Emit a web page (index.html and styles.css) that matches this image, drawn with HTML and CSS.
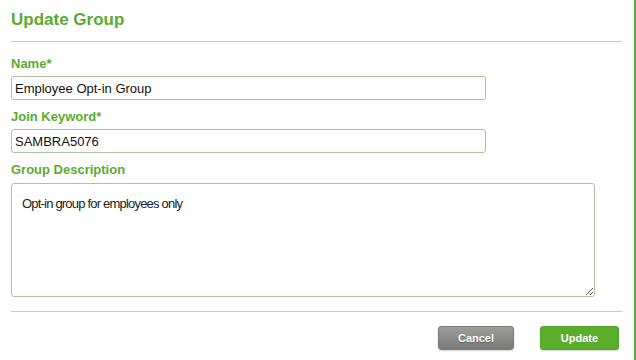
FILE: index.html
```html
<!DOCTYPE html>
<html>
<head>
  <meta charset="UTF-8" />
  <title>Update Group</title>
  <link rel="stylesheet" href="styles.css">
</head>
<body>
  <div class="page">
    <div class="dialog">
      <h2 class="dialog-title">Update Group</h2>
      <hr class="dialog-rule">
      <form class="group-form">
        <label class="field-label" for="groupName">Name*</label>
        <input id="groupName" class="field-input" type="text" value="Employee Opt-in Group" />

        <label class="field-label gap" for="joinKeyword">Join Keyword*</label>
        <input id="joinKeyword" class="field-input" type="text" value="SAMBRA5076" />

        <label class="field-label gap" for="groupDesc">Group Description</label>
        <textarea id="groupDesc" class="field-textarea">Opt-in group for employees only</textarea>
      </form>
      <hr class="dialog-rule bottom">
      <div class="dialog-actions">
        <button class="btn btn-cancel" type="button">Cancel</button>
        <button class="btn btn-update" type="button">Update</button>
      </div>
    </div>
  </div>
</body>
</html>
```

FILE: styles.css
```css
body {
  margin: 0;
  background: #fff;
  font-family: "Liberation Sans", Arial, sans-serif;
}
.page {
  width: 634px;
  height: 360px;
  border-right: 2px solid #5ba73d;
  background: #fff;
}
.dialog {
  width: 611px;
  padding: 10px 0 0 11px;
}
.dialog-title {
  margin: 0;
  font-size: 17px;
  line-height: 20px;
  font-weight: bold;
  color: #5aab32;
}
.dialog-rule {
  margin: 11px 0 14px 0;
  height: 0;
  border: 0;
  border-top: 1px solid #c9c9c9;
}
.dialog-rule.bottom {
  margin: 14px 0 14px 0;
}
.group-form {
  display: flex;
  flex-direction: column;
  align-items: flex-start;
}
.field-label {
  display: block;
  font-size: 13px;
  line-height: 16px;
  font-weight: bold;
  color: #5aab32;
}
.field-label.gap {
  margin-top: 9px;
}
.field-input {
  margin-top: 4px;
  width: 475px;
  height: 24px;
  box-sizing: border-box;
  padding: 0 3px;
  border: 1px solid #a8c59c;
  border-radius: 3px;
  font-family: "Liberation Sans", Arial, sans-serif;
  font-size: 13px;
  color: #111;
  outline: none;
}
.field-textarea {
  margin-top: 5px;
  width: 584px;
  height: 114px;
  box-sizing: border-box;
  padding: 12px 10px;
  border: 1px solid #a8c59c;
  border-radius: 3px;
  font-family: "Liberation Sans", Arial, sans-serif;
  font-size: 13px;
  letter-spacing: -0.8px;
  line-height: 15px;
  color: #222;
  outline: none;
}
.dialog-actions {
  display: flex;
  justify-content: flex-end;
  gap: 26px;
  padding-right: 3px;
}
.btn {
  height: 24px;
  border-radius: 3px;
  font-family: "Liberation Sans", Arial, sans-serif;
  font-size: 11px;
  font-weight: bold;
  color: #fff;
  cursor: pointer;
  box-shadow: 0 1px 2px rgba(0,0,0,0.18);
}
.btn-cancel {
  width: 76px;
  background: linear-gradient(#9d9d9b, #7a7a78);
  border: 1px solid #7a7a78;
  text-shadow: 0 1px 1px rgba(0,0,0,0.3);
}
.btn-update {
  width: 79px;
  background: #5aad2b;
  border: 1px solid #56a828;
}
```
